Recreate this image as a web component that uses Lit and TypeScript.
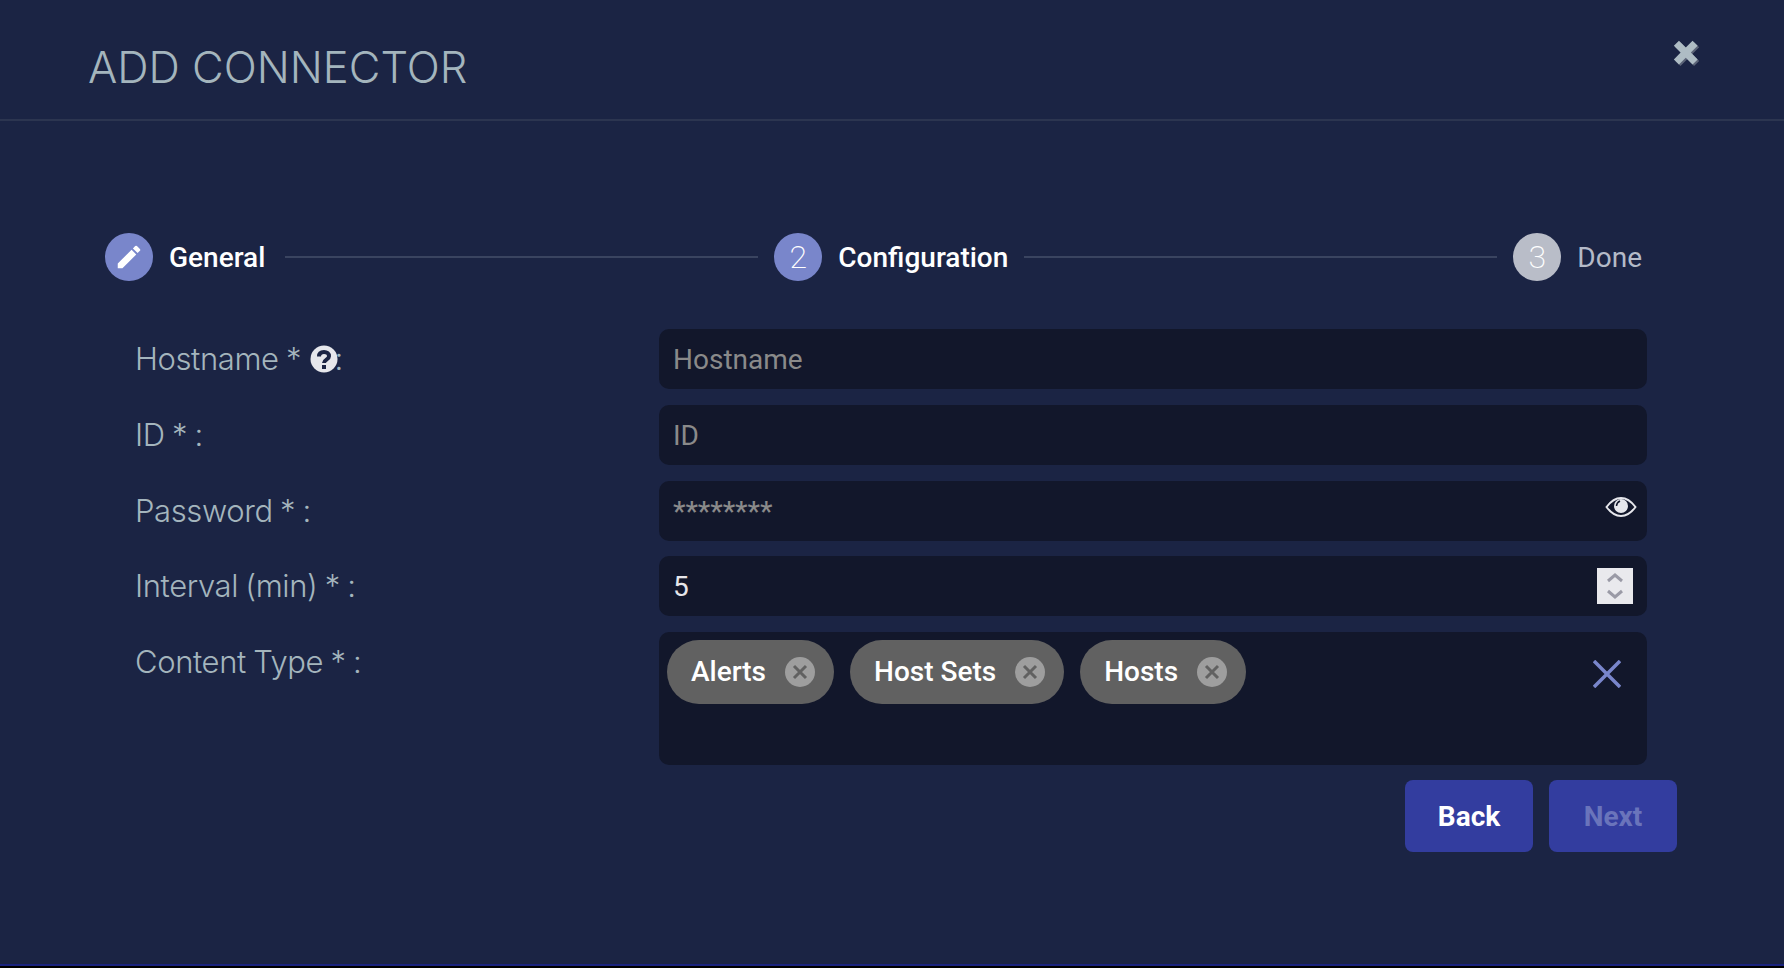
import { LitElement, html, css } from "lit";
import { customElement } from "lit/decorators.js";

const chips = ["Alerts", "Host Sets", "Hosts"];

@customElement("app-root")
export class AppRoot extends LitElement {
  static styles = css`
    :host { display: block; height: 968px; background: #000; font-family: Roboto, sans-serif; overflow: hidden; }
    .page { box-sizing: border-box; height: 966px; background: #1b2444; border-bottom: 2px solid #1a237e; }
    .head { box-sizing: border-box; height: 121px; padding: 40px 81px 0 88px; border-bottom: 2px solid #2c3550; display: flex; justify-content: space-between; align-items: flex-start; }
    .title { font: 300 43.5px/54px Inter, sans-serif; color: #a4b5bd; margin: 0; }
    .close { display: block; width: 30px; height: 30px; margin-top: -1px; }
    .stepper { display: flex; align-items: center; padding: 112px 142px 0 105px; height: 48px; }
    .step { display: flex; align-items: center; gap: 16px; font: 500 28px/48px Roboto, sans-serif; color: #fff; }
    .step.first { padding-right: 4px; }
    .step.off { color: #b4bac8; font-weight: 400; }
    .text { padding-top: 2px; }
    .num { width: 48px; height: 48px; border-radius: 50%; background: #7986cb; display: flex; align-items: center; justify-content: center; font: 200 32px/48px Roboto, sans-serif; color: #fff; }
    .step.off .num { background: #b9bdc8; }
    .line { flex: 1; height: 2px; background: #3a4460; margin: 0 16px; }
    .form { display: grid; grid-template-columns: 524px 988px; padding: 48.3px 0 0 135px; row-gap: 15.7px; }
    .label { font: 300 31px/60px Inter, sans-serif; letter-spacing: -0.4px; word-spacing: -1px; color: #a4b5bd; display: flex; align-items: center; white-space: pre; height: 60px; }
    .label svg { margin: 0 -4px 0 2px; }
    .field { box-sizing: border-box; height: 60px; background: #12172b; border-radius: 10px; padding: 2px 14px 0; display: flex; align-items: center; justify-content: space-between; font: 400 28px/58px Roboto, sans-serif; color: #8a8a8a; }
    .field.value { color: #e6e6ea; }
    .stars { font-weight: 500; }
    .eye { margin: 0 -4px 10px 0; display: block; }
    .spin { width: 36px; height: 36px; background: #e9e9ed; display: block; margin-bottom: 2px; }
    .multi { box-sizing: border-box; height: 133px; background: #12172b; border-radius: 10px; padding: 8px 26px 0 8px; display: flex; align-items: flex-start; gap: 16px; }
    .chip { height: 64px; border-radius: 32px; background: #616161; display: flex; align-items: center; gap: 19px; padding: 0 19px 0 24px; font: 500 28px/64px Roboto, sans-serif; color: #fff; }
    .clear { margin: 20px 0 0 auto; display: block; }
    .actions { display: flex; justify-content: flex-end; gap: 16px; padding: 15px 107px 0 0; }
    .btn { width: 128px; height: 72px; border-radius: 8px; background: #333d9f; color: #fff; font: 700 28px/74px Roboto, sans-serif; text-align: center; }
    .btn.dis { color: #6a74bb; }
  `;

  render() {
    return html`<div class="page">
      <div class="head">
        <h1 class="title">ADD CONNECTOR</h1>
        <svg class="close" viewBox="0 0 30 30"><path fill="#5b6377" d="M7 2 15 10 23 2 29 8 21 16 29 24 23 30 15 22 7 30 1 24 9 16 1 8Z" transform="translate(1.500 1.500) scale(.85)"/><path fill="#aebcc4" d="M7 2 15 10 23 2 29 8 21 16 29 24 23 30 15 22 7 30 1 24 9 16 1 8Z" transform="scale(.85)"/></svg>
      </div>
      <div class="stepper">
        <div class="step first"><span class="num"><svg width="30" height="30" viewBox="0 0 24 24"><path fill="#fff" d="M3 17.25V21h3.75L17.81 9.94l-3.75-3.75L3 17.25zM20.71 7.04a1 1 0 0 0 0-1.41l-2.34-2.34a1 1 0 0 0-1.41 0l-1.83 1.83 3.75 3.75 1.83-1.83z"/></svg></span><span class="text">General</span></div>
        <div class="line"></div>
        <div class="step"><span class="num">2</span><span class="text">Configuration</span></div>
        <div class="line"></div>
        <div class="step off"><span class="num">3</span><span class="text">Done</span></div>
      </div>
      <div class="form">
        <div class="label">Hostname * <svg width="28" height="28" viewBox="0 0 28 28"><circle cx="14" cy="14" r="13.500" fill="#e6e7ec"/><path fill="none" stroke="#1b2444" stroke-width="4" d="M9 11.500C9 8.500 11 7 14 7s5 1.600 5 4.200c0 3.500-5 3.300-5 6.800"/><rect x="12" y="20" width="4" height="4" fill="#1b2444"/></svg>:</div>
        <div class="field">Hostname</div>
        <div class="label">ID * :</div>
        <div class="field">ID</div>
        <div class="label">Password * :</div>
        <div class="field"><span class="stars">********</span><svg class="eye" width="32" height="22" viewBox="0 0 32 22"><path fill="none" stroke="#e6e7ec" stroke-width="2" d="M1.500 11C6 5 10.500 2 16 2s10 3 14.500 9C26 17 21.500 20 16 20S6 17 1.500 11Z"/><circle cx="16" cy="10" r="7" fill="#e6e7ec"/><path fill="none" stroke="#12172b" stroke-width="1.500" d="M11.500 10c0-2.500 1.500-4 3.500-5"/></svg></div>
        <div class="label">Interval (min) * :</div>
        <div class="field value">5<svg class="spin" viewBox="0 0 36 36"><path fill="none" stroke="#9a9aa6" stroke-width="3" d="M11 13l7-6 7 6M11 23l7 6 7-6"/></svg></div>
        <div class="label">Content Type * :</div>
        <div class="multi">
          ${chips.map((c) => html`<div class="chip">${c}<svg width="30" height="30" viewBox="0 0 30 30"><circle cx="15" cy="15" r="15" fill="#9e9e9e"/><path stroke="#616161" stroke-width="3" d="M9 9l12 12M21 9 9 21"/></svg></div>`)}
          <svg class="clear" width="28" height="28" viewBox="0 0 28 28"><path stroke="#7986cb" stroke-width="3.500" d="M1 1l26 26M27 1 1 27"/></svg>
        </div>
      </div>
      <div class="actions"><div class="btn">Back</div><div class="btn dis">Next</div></div>
    </div>`;
  }
}
